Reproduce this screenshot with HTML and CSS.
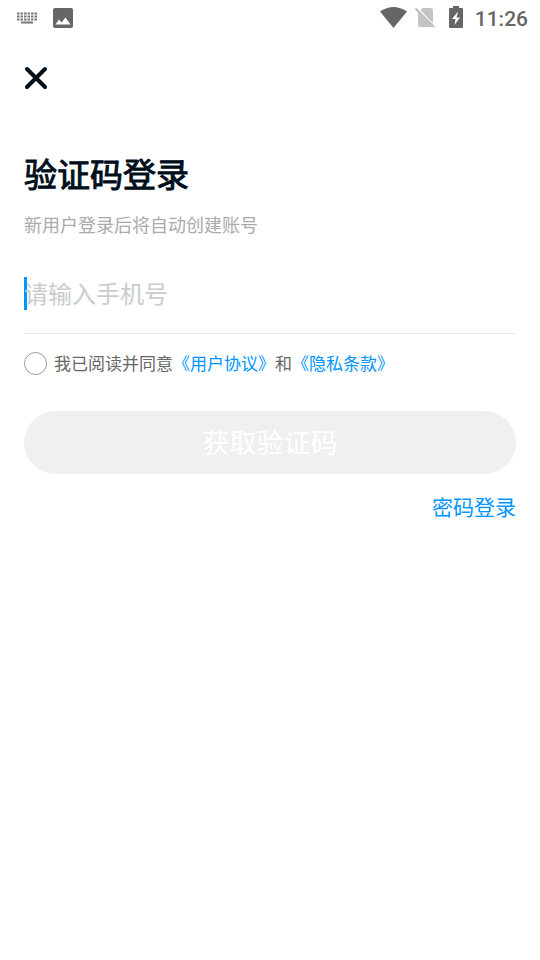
FILE: index.html
```
<!DOCTYPE html>
<html lang="zh-CN">
<head>
<meta charset="utf-8">
<meta name="viewport" content="width=device-width, initial-scale=1">
<title>验证码登录</title>
<link rel="stylesheet" href="styles.css">
</head>
<body>
<header class="status">
  <div class="status-group status-left">
    <svg class="icon-keyboard" viewBox="0 0 22 12" aria-hidden="true">
      <path d="M1 1.500h20M1 4.500h20M1 7.500h20" stroke-dasharray="2.500 1"/>
      <path d="M5 10.500h12"/>
    </svg>
    <svg class="icon-image" viewBox="0 0 20 20" aria-hidden="true">
      <path fill-rule="evenodd" d="M2 0h16a2 2 0 0 1 2 2v16a2 2 0 0 1-2 2H2a2 2 0 0 1-2-2V2a2 2 0 0 1 2-2zM2.500 16.500h15L12.500 9.500 8.500 14.500 6 11.500z"/>
    </svg>
  </div>
  <div class="status-group status-right">
    <svg class="icon-wifi" viewBox="0 0 27 21" aria-hidden="true"><path d="M0 4.500Q13.500-4.500 27 4.500L13.500 21z"/></svg>
    <svg class="icon-sim" viewBox="0 0 20 21" aria-hidden="true">
      <path d="M7.500 1H16a2 2 0 0 1 2 2v16a2 2 0 0 1-2 1H5a2 2 0 0 1-2-2V5z" fill="#c5c5c5"/>
      <path d="M1.500.5l19 20" stroke="#fff" stroke-width="2"/>
      <path d="M.5 1.500l18.500 18.500" stroke="#bdbdbd" stroke-width="2"/>
    </svg>
    <svg class="icon-battery" viewBox="0 0 14 22" aria-hidden="true">
      <path fill-rule="evenodd" d="M4 0h6v2h3q1 0 1 1v18q0 1-1 1H1q-1 0-1-1V3q0-1 1-1h3zM9 5.500L3 13h3.500L5.500 19 11 11.500H7.500z"/>
    </svg>
    <time class="clock">11:26</time>
  </div>
</header>
<main class="page">
  <button class="close" type="button" aria-label="关闭">
    <svg viewBox="0 0 24 24" aria-hidden="true"><path d="M3 3l18 18M21 3L3 21"/></svg>
  </button>
  <h1 class="title">验证码登录</h1>
  <p class="subtitle">新用户登录后将自动创建账号</p>
  <form class="form">
    <div class="field">
      <input class="phone" type="tel" aria-label="手机号" placeholder="请输入手机号">
    </div>
    <div class="agreement">
      <input class="agree" id="agree" type="checkbox">
      <label for="agree">我已阅读并同意<a href="#terms">《用户协议》</a>和<a href="#privacy">《隐私条款》</a></label>
    </div>
    <button class="submit" type="button">获取验证码</button>
    <a class="password-login" href="#password">密码登录</a>
  </form>
</main>
</body>
</html>
```
FILE: styles.css
```
* { box-sizing: border-box; }

body {
  margin: 0;
  background: #fff;
  color: #000f1a;
  font-family: "Noto Sans CJK SC", sans-serif;
}

a { color: #0095ff; text-decoration: none; }

svg { display: block; }

.status {
  display: flex;
  justify-content: space-between;
  align-items: center;
  height: 36px;
  padding: 0 12px 0 16px;
}

.status-group { display: flex; align-items: center; fill: #666; }
.status-left { gap: 15px; }
.status-right { gap: 12px; }

.icon-keyboard { width: 22px; height: 12px; fill: none; stroke: #777; stroke-width: 2; }
.icon-image { width: 20px; height: 20px; }
.icon-wifi { width: 27px; height: 21px; margin: 0 -4px 2px 0; }
.icon-sim { width: 20px; height: 21px; margin: 0 2px 1px 0; }
.icon-battery { width: 14px; height: 22px; margin-bottom: 2px; }

.clock {
  padding-top: 2px;
  color: #666;
  font: 500 21px/34px Roboto, sans-serif;
}

.page { padding: 30px 24px; }

.close {
  display: block;
  width: 24px;
  height: 24px;
  padding: 0;
  border: 0;
  background: none;
}

.close path { stroke: #000f1a; stroke-width: 4; stroke-linecap: round; }

.title {
  margin: 60px 0 0;
  font-size: 33px;
  font-weight: 400;
  line-height: 46px;
  -webkit-text-stroke: 1px currentColor;
}

.subtitle {
  margin: 14px 0 0;
  color: #aaa;
  font-size: 18px;
  line-height: 28px;
}

.form { display: flex; flex-direction: column; }

.field {
  margin-top: 39px;
  padding-bottom: 23px;
  border-bottom: 1px solid #ebebeb;
}

.phone {
  display: block;
  width: 100%;
  height: 33px;
  padding: 0 0 2px;
  border: 0;
  outline: 0;
  background: linear-gradient(#0095ff, #0095ff) left / 3px 100% no-repeat;
  color: inherit;
  font: 24px/31px "Noto Sans CJK SC", sans-serif;
}

.phone::placeholder { color: #c8cccf; opacity: 1; }

.agreement {
  display: flex;
  align-items: flex-start;
  gap: 7px;
  margin-top: 18px;
  color: #666;
  font-size: 17px;
  line-height: 22px;
}

.agree {
  flex: none;
  appearance: none;
  width: 23px;
  height: 23px;
  margin: 0;
  border: 1px solid #999;
  border-radius: 50%;
}

.submit {
  height: 63px;
  margin-top: 36px;
  padding: 0 0 2px;
  border: 0;
  border-radius: 32px;
  background: #f0f0f0;
  color: #fff;
  font: 27px/40px "Noto Sans CJK SC", sans-serif;
}

.password-login {
  align-self: flex-end;
  margin-top: 17px;
  font-size: 21px;
  line-height: 30px;
}
```
